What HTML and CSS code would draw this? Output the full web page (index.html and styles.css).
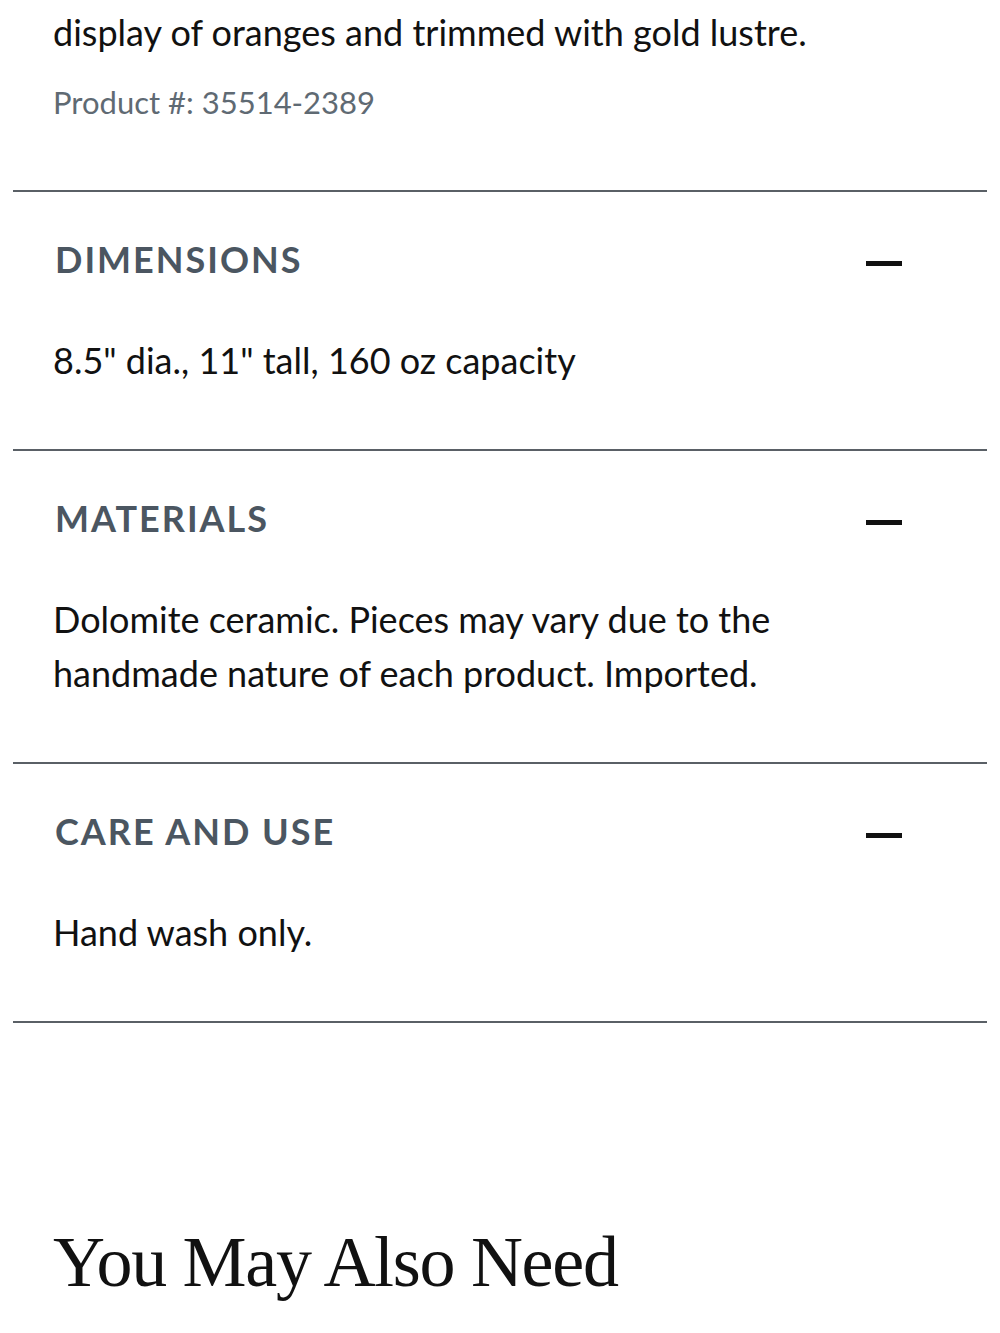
FILE: index.html
```html
<!DOCTYPE html>
<html lang="en">
<head>
  <meta charset="UTF-8" />
  <title>Orange Pitcher | Product Details</title>
  <meta name="viewport" content="width=device-width, initial-scale=1.0"/>
  <link rel="stylesheet" href="styles.css">
</head>
<body>

<div class="product-info">
  <div class="description">
    <p>display of oranges and trimmed with gold lustre.</p>
    <p class="sku">Product #: 35514-2389</p>
  </div>

  <div class="accordion">
    <div class="panel">
      <div class="panel-head">
        <h3>Dimensions</h3>
        <span class="toggle"></span>
      </div>
      <div class="panel-body">
        <p>8.5" dia., 11" tall, 160 oz capacity</p>
      </div>
    </div>

    <div class="panel">
      <div class="panel-head">
        <h3>Materials</h3>
        <span class="toggle"></span>
      </div>
      <div class="panel-body">
        <p>Dolomite ceramic. Pieces may vary due to the handmade nature of each product. Imported.</p>
      </div>
    </div>

    <div class="panel">
      <div class="panel-head">
        <h3>Care and Use</h3>
        <span class="toggle"></span>
      </div>
      <div class="panel-body">
        <p>Hand wash only.</p>
      </div>
    </div>
  </div>

  <h2 class="related-title">You May Also Need</h2>
</div>

</body>
</html>
```

FILE: styles.css
```css
body {
  font-family: 'Lato', 'Noto Sans', sans-serif;
  margin: 0;
  background: #fff;
  color: #111;
}

.product-info {
  padding: 0 13px;
}

.description {
  padding: 0 40px;
  border-bottom: 2px solid #5a6066;
}

.description p {
  margin: 0;
  font-size: 36px;
  line-height: 54px;
  margin-top: 5px;
}

.description .sku {
  font-size: 31px;
  color: #5f6a73;
  margin: 16px 0 61px;
}

.panel {
  border-bottom: 2px solid #5a6066;
  padding: 0 40px;
}

.panel-head {
  display: flex;
  justify-content: space-between;
  align-items: center;
  padding: 43px 0 0;
  height: 48px;
}

.panel-head h3 {
  margin: 0;
  margin-left: 2px;
  font-size: 36px;
  font-weight: 700;
  letter-spacing: 2px;
  text-transform: uppercase;
  color: #4b5661;
}

.toggle {
  width: 36px;
  height: 5px;
  background: #111;
  margin-right: 45px;
  margin-top: 8px;
}

.panel-body {
  padding: 50px 0 62px;
}

.panel-body p {
  margin: 0;
  font-size: 36px;
  line-height: 54px;
  max-width: 800px;
}

.related-title {
  margin: 198px 40px 0;
  font-family: 'Liberation Serif', serif;
  font-weight: 400;
  font-size: 72px;
  letter-spacing: -1.3px;
  color: #111;
}
```
